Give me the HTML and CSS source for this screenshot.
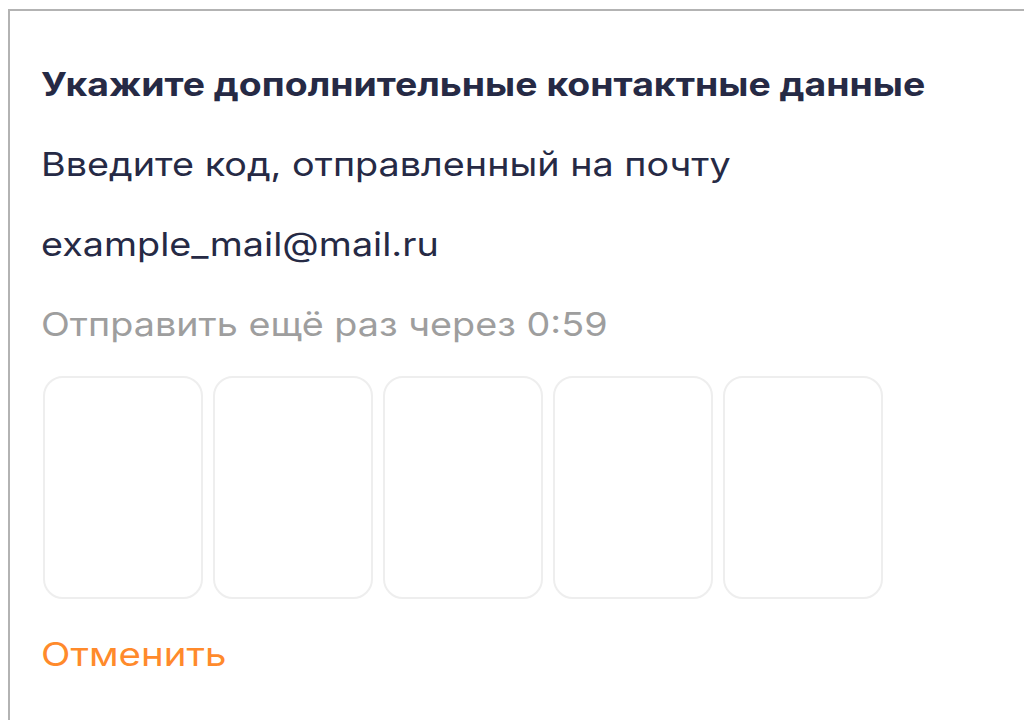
FILE: index.html
```html
<!DOCTYPE html>
<html lang="ru">
<head>
<meta charset="utf-8">
<link rel="stylesheet" href="styles.css">
</head>
<body>
<section class="panel">
  <h2 class="title">Укажите дополнительные контактные данные</h2>
  <p class="line">Введите код, отправленный на почту</p>
  <p class="line">example_mail@mail.ru</p>
  <p class="line muted">Отправить ещё раз через 0:59</p>
  <div class="code">
    <input class="cell" type="text" maxlength="1">
    <input class="cell" type="text" maxlength="1">
    <input class="cell" type="text" maxlength="1">
    <input class="cell" type="text" maxlength="1">
    <input class="cell" type="text" maxlength="1">
  </div>
  <a class="cancel" href="#">Отменить</a>
</section>
</body>
</html>
```
FILE: styles.css
```css
html, body {
  margin: 0;
  background: #fff;
  overflow: hidden;
}
body {
  padding: 9px 0 0 8px;
  font-family: Inter, "Noto Sans", sans-serif;
  color: #262a45;
}
.panel {
  border-top: 2px solid #b3b3b3;
  border-left: 2px solid #b3b3b3;
  padding: 53px 0 40px 31px;
  min-height: 700px;
  display: flex;
  flex-direction: column;
  align-items: flex-start;
}
/* wide setting of the text: glyphs stretched horizontally */
.title,
.line,
.cancel {
  font-size: 33px;
  line-height: 40px;
  transform: scaleX(1.144);
  transform-origin: left center;
}
.title {
  margin: 0;
  font-weight: 700;
  transform: scaleX(1.133);
}
.line {
  margin: 40px 0 0;
  font-weight: 400;
}
.muted {
  color: #9e9e9e;
}
.code {
  display: flex;
  gap: 10px;
  margin-top: 32px;
  margin-left: 2px;
}
.cell {
  width: 160px;
  height: 223px;
  box-sizing: border-box;
  border: 2px solid #eeeeee;
  border-radius: 20px;
  background: #fff;
  padding: 0;
  outline: none;
}
.cancel {
  margin-top: 35px;
  font-weight: 400;
  color: #ff8a2b;
  text-decoration: none;
  transform: scaleX(1.165);
}
```
